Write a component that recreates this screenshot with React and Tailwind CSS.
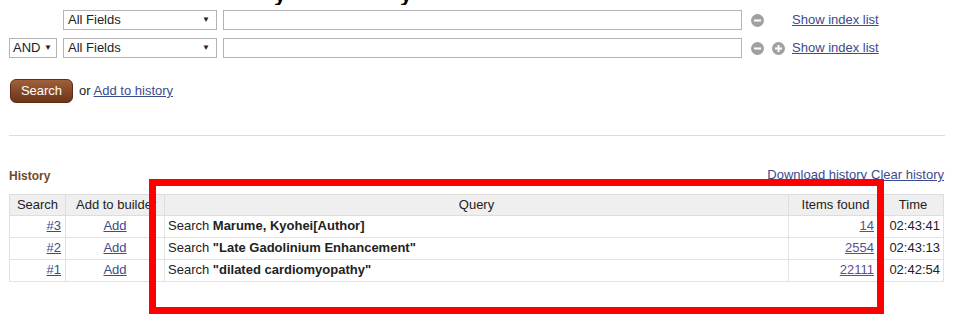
import React from "react";

function Sel({ w, label }) {
  return (
    <div className={`flex items-center justify-between h-[20px] border border-[#b4b4b4] bg-white pl-[4px] pr-[6px] ${w}`}>
      <span>{label}</span>
      <span className="text-[8px] leading-none">▼</span>
    </div>
  );
}

function Circ({ plus }) {
  return (
    <svg width="13" height="13" viewBox="0 0 13 13">
      <circle cx="6.5" cy="6.5" r="6.5" fill="#a0a0a0" />
      <rect x="3" y="5.5" width="7" height="2" fill="#fff" />
      {plus && <rect x="5.5" y="3" width="2" height="7" fill="#fff" />}
    </svg>
  );
}

const link = "text-[#3c4a8e] underline";

export default function App() {
  const rows = [
    ["#3", "Marume, Kyohei[Author]", "14", "02:43:41"],
    ["#2", "\"Late Gadolinium Enhancement\"", "2554", "02:43:13"],
    ["#1", "\"dilated cardiomyopathy\"", "22111", "02:42:54"],
  ];
  return (
    <div className="relative w-[954px] h-[322px] bg-white overflow-hidden text-[13px] text-[#222] font-['Liberation_Sans',Arial,sans-serif]">
      <div className="h-[5px] overflow-hidden relative">
        <div className="absolute bottom-0 left-[274px] font-bold text-[22px] leading-[22px] text-black">y</div>
        <div className="absolute bottom-0 left-[400px] font-bold text-[22px] leading-[22px] text-black">y</div>
      </div>
      <div className="px-[9px]">
        <div className="flex items-center h-[18px] mt-[6px]">
          <div className="w-[54px]" />
          <Sel w="w-[154px]" label="All Fields" />
          <div className="ml-[6px] w-[519px] h-[20px] border border-[#b4b4b4]" />
          <div className="ml-[9px]"><Circ /></div>
          <div className="w-[16px]" />
          <a className={`${link} ml-[12px]`}>Show index list</a>
        </div>
        <div className="flex items-center h-[18px] mt-[10px]">
          <div className="w-[48px] flex items-center justify-between h-[20px] border border-[#b4b4b4] pl-[3px] pr-[4px]">
            <span>AND</span>
            <span className="text-[8px] leading-none">▼</span>
          </div>
          <div className="w-[6px]" />
          <Sel w="w-[154px]" label="All Fields" />
          <div className="ml-[6px] w-[519px] h-[20px] border border-[#b4b4b4]" />
          <div className="ml-[9px]"><Circ /></div>
          <div className="ml-[8px]"><Circ plus /></div>
          <a className={`${link} ml-[7px]`}>Show index list</a>
        </div>
        <div className="flex items-center mt-[22px] ml-[1px]">
          <button className="h-[24px] w-[63px] rounded-[6px] border border-[#5e2d14] bg-gradient-to-b from-[#a0603a] to-[#6c3418] text-white text-[13px]">
            Search
          </button>
          <span className="ml-[6px]">or</span>
          <a className={`${link} ml-[3px]`}>Add to history</a>
        </div>
        <div className="mt-[32px] border-t border-[#dcdcdc]" />
        <div className="flex items-end justify-between mt-[29px]">
          <div className="font-bold text-[12px] text-[#74482a]">History</div>
          <div className="flex gap-[4px] mr-[1px]">
            <a className={link}>Download history</a>
            <a className={link}>Clear history</a>
          </div>
        </div>
        <table className="mt-[9px] w-[935px] border-collapse text-[13px]">
          <thead>
            <tr className="bg-[#efefef] h-[21px]">
              <th className="font-normal border border-[#dddddd] w-[56px]">Search</th>
              <th className="font-normal border border-[#dddddd] w-[99px] text-left pl-[10px] whitespace-nowrap overflow-hidden">Add to builder</th>
              <th className="font-normal border border-[#dddddd]">Query</th>
              <th className="font-normal border border-[#dddddd] w-[94px]">Items found</th>
              <th className="font-normal border border-[#dddddd] w-[61px]">Time</th>
            </tr>
          </thead>
          <tbody>
            {rows.map((r) => (
              <tr key={r[0]} className="h-[22px]">
                <td className="border border-[#e2e2e2] text-right pr-[4px]"><a className={link}>{r[0]}</a></td>
                <td className="border border-[#e2e2e2] text-center"><a className={link}>Add</a></td>
                <td className="border border-[#e2e2e2] pl-[3px]">Search <b>{r[1]}</b></td>
                <td className="border border-[#e2e2e2] text-right pr-[8px]"><a className="text-[#5a4f93] underline">{r[2]}</a></td>
                <td className="border border-[#e2e2e2] text-right pr-[3px]">{r[3]}</td>
              </tr>
            ))}
          </tbody>
        </table>
      </div>
      <div className="absolute left-[149px] top-[179px] w-[735px] h-[135px] border-[7px] border-[#ff0000]" />
    </div>
  );
}
